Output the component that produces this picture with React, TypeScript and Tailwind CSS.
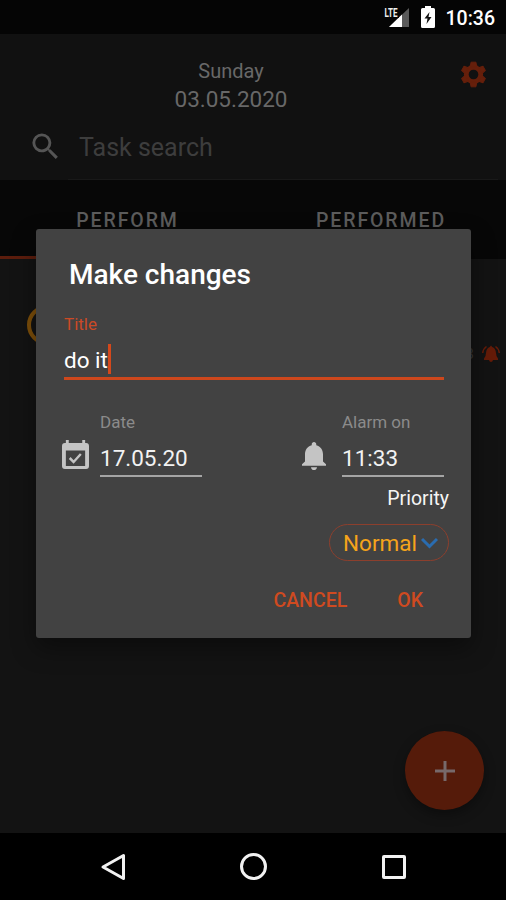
import { MdSearch } from 'react-icons/md';

const BELL_PATH =
  'M12 22c1.1 0 2-.9 2-2h-4c0 1.1.89 2 2 2zm6-6v-5c0-3.07-1.64-5.64-4.5-6.32V4c0-.83-.67-1.5-1.5-1.5s-1.5.67-1.5 1.5v.68C7.63 5.36 6 7.92 6 11v5l-2 2v1h16v-1l-2-2z';

function StatusBar() {
  return (
    <div className="flex h-[34px] shrink-0 items-center justify-end bg-[#050505] pr-[11px] text-white">
      <svg className="mr-[11px] h-[22px] w-[26px]" viewBox="0 0 26 22" aria-hidden="true">
        <path d="M25 2v19H5z" fill="#5a5a5a" />
        <path d="M18 8.500V21H5z" fill="#fff" />
        <path d="M0 0h15v12H0z" fill="#050505" />
        <text x="0.500" y="10.500" textLength="13" lengthAdjust="spacingAndGlyphs" fontSize="12.500" fontWeight="700" fill="#eee">
          LTE
        </text>
      </svg>
      <svg className="mr-[11px] h-[22px] w-[14px]" viewBox="0 0 14 22" aria-hidden="true">
        <path d="M4 0h6v2h2.500q1.500 0 1.500 1.500v17q0 1.500-1.500 1.500h-11Q0 22 0 20.500v-17Q0 2 1.500 2H4z" fill="#fff" />
        <path d="M8.500 6 3.500 12.500h3L5.500 18l5-7h-3z" fill="#111" />
      </svg>
      <span className="pt-[3px] text-[19.500px] font-medium leading-[22px]">10:36</span>
    </div>
  );
}

function GearIcon() {
  return (
    <svg className="h-[27px] w-[27px]" viewBox="-14 -14 28 28" aria-hidden="true">
      <circle r="7.500" fill="none" stroke="#651f0b" strokeWidth="5" />
      <g fill="#651f0b" stroke="#651f0b" strokeLinejoin="round">
        {[0, 60, 120, 180, 240, 300].map((angle) => (
          <path key={angle} d="M-2.500-12.800h5l1 4.800h-7z" transform={`rotate(${angle})`} />
        ))}
      </g>
    </svg>
  );
}

function Header() {
  return (
    <header className="flex h-[146px] shrink-0 flex-col bg-[#111]">
      <div className="grid h-[90px] grid-cols-[44px_1fr_88px] pt-6">
        <div className="col-start-2 flex flex-col items-center text-[#686868]">
          <span className="text-[20px] leading-[26px]">Sunday</span>
          <span className="text-[22.500px] leading-[30px]">03.05.2020</span>
        </div>
        <button aria-label="Settings" className="mr-[17px] flex h-8 w-8 items-center justify-center justify-self-end">
          <GearIcon />
        </button>
      </div>
      <div className="flex grow items-stretch">
        <MdSearch className="ml-[28px] mt-[5px] size-[35px] text-[#555]" />
        <div className="ml-[5px] mr-2 grow border-b border-[#191919] pl-[11px] pt-[9px] text-[25px] leading-[30px] text-[#3d3d3d]">
          Task search
        </div>
      </div>
    </header>
  );
}

function Tabs() {
  return (
    <nav className="grid h-[79px] shrink-0 grid-cols-2 bg-[#070707] text-center text-[19.500px] font-medium leading-6 tracking-[1.900px] text-[#5c5c5c]">
      <div className="border-b-[3px] border-[#5c1d0d] pl-[2px] pt-[29px]">PERFORM</div>
      <div className="pl-[3px] pt-[29px]">PERFORMED</div>
    </nav>
  );
}

function TaskList() {
  return (
    <main className="relative grow overflow-hidden bg-[#131313]">
      <div className="flex h-[140px] justify-between pl-[27px] pr-[6px] pt-[46px]">
        <span className="size-[40px] rounded-full border-4 border-[#7d4f0a]" />
        <span className="mt-[40px] flex h-[18px] items-center gap-[8px] text-[15px] text-[#333]">
          11:33
          <svg className="h-[18px] w-[18px]" viewBox="0 0 18 18" fill="#651b08" aria-hidden="true">
            <path d="M9 .5 10.200 2q3.400 1 3.800 6 0 3 2 5.500V15h-5q-.5 2-2 2t-2-2H2v-1.500Q4 11 4 8q.4-5 3.800-6z" />
            <path d="M4.500 1.500Q1 4 .7 8M13.500 1.500Q17 4 17.300 8" fill="none" stroke="#651b08" strokeWidth="1.500" />
          </svg>
        </span>
      </div>
      <button
        aria-label="Add task"
        className="absolute bottom-[23px] right-[22px] flex size-[79px] items-center justify-center rounded-full bg-[#551b0a] shadow-[0_5px_12px_rgba(0,0,0,0.35)]"
      >
        <svg className="size-[20px]" viewBox="0 0 20 20" stroke="#77696a" strokeWidth="3" aria-hidden="true">
          <path d="M10 0v20M0 10h20" />
        </svg>
      </button>
    </main>
  );
}

function SystemNav() {
  return (
    <footer className="flex h-[67px] shrink-0 items-center bg-black pl-[100px]">
      <svg className="h-[28px] w-[26px]" viewBox="0 0 26 28" fill="none" stroke="#f2f2f2" strokeWidth="3" strokeLinejoin="round" aria-hidden="true">
        <path d="M23.500 2.500v23L3 14z" />
      </svg>
      <span className="ml-[114px] size-[27px] rounded-full border-[3px] border-[#f2f2f2]" />
      <span className="ml-[115px] size-[24px] rounded-[2px] border-[3px] border-[#f2f2f2]" />
    </footer>
  );
}

function CalendarIcon() {
  return (
    <svg className="h-[30px] w-[27px]" viewBox="0 0 28 30" preserveAspectRatio="none" aria-hidden="true">
      <path
        fill="#c4c4c4"
        fillRule="evenodd"
        d="M4 0h3v3h14V0h3v3h1q3 0 3 3v20q0 3-3 3H3q-3 0-3-3V6q0-3 3-3h1zM4 10.500v15.500h20V10.500z"
      />
      <path d="m8 18 4 4 7.500-8" fill="none" stroke="#c4c4c4" strokeWidth="2.500" />
    </svg>
  );
}

function BellIcon() {
  return (
    <svg className="h-[28px] w-[24px]" viewBox="4 2.5 16 19.5" preserveAspectRatio="none" fill="#c4c4c4" aria-hidden="true">
      <path d={BELL_PATH} />
    </svg>
  );
}

interface FieldProps {
  label: string;
  value: string;
}

function Field({ label, value }: FieldProps) {
  return (
    <div className="w-[102px]">
      <div className="text-[17px] leading-5 text-[#8b8b8b]">{label}</div>
      <div className="mt-[10px] h-[35px] border-b-2 border-[#a5a5a5] text-[22.500px] leading-[33px] text-[#f2f2f2]">
        {value}
      </div>
    </div>
  );
}

function EditDialog() {
  return (
    <div
      role="dialog"
      aria-label="Make changes"
      className="absolute left-[36px] top-[229px] flex h-[409px] w-[435px] flex-col rounded-[3px] bg-[#424242] pl-7 pr-[22px] pt-[30px] shadow-[0_10px_24px_rgba(0,0,0,0.4)]"
    >
      <h2 className="pl-[5px] text-[28px] font-medium leading-[31px] text-white">Make changes</h2>

      <div className="mt-6 text-[17px] leading-5 text-[#cb4a26]">Title</div>
      <div className="mr-[5px] mt-[11px] flex h-[35px] border-b-[3px] border-[#cd471c] text-[22.500px] leading-[31px] text-white">
        do it
        <span className="-mt-[1px] h-[30px] w-[3px] bg-[#d4481b]" />
      </div>

      <div className="mt-8 flex">
        <div className="-ml-[2px] mr-[11px] pt-[28px]">
          <CalendarIcon />
        </div>
        <Field label="Date" value="17.05.20" />
        <div className="ml-auto mr-4 pt-[30px]">
          <BellIcon />
        </div>
        <div className="mr-[5px]">
          <Field label="Alarm on" value="11:33" />
        </div>
      </div>

      <div className="mt-[11px] text-right text-[19.500px] leading-[22px] text-[#f5f5f5]">Priority</div>
      <button className="mt-[14px] flex h-[37px] w-[120px] items-center self-end rounded-full border border-[#8c3f2d] pl-[13px] text-[#f5a41b]">
        <span className="pt-[2px] text-[22.500px] leading-[35px]">Normal</span>
        <svg className="ml-[4px] h-[12px] w-[17px]" viewBox="0 0 17 12" fill="none" stroke="#2a6cb0" strokeWidth="3" aria-hidden="true">
          <path d="m1 2 7.500 7.500L16 2" />
        </svg>
      </button>

      <div className="mr-[26px] mt-[22px] flex justify-end gap-[50px] text-[19.500px] font-medium leading-9 text-[#cf4a20]">
        <button>CANCEL</button>
        <button>OK</button>
      </div>
    </div>
  );
}

export default function App() {
  return (
    <div className="relative flex h-[900px] w-[506px] flex-col overflow-hidden bg-[#131313] font-['Roboto',sans-serif]">
      <StatusBar />
      <Header />
      <Tabs />
      <TaskList />
      <SystemNav />
      <EditDialog />
    </div>
  );
}
